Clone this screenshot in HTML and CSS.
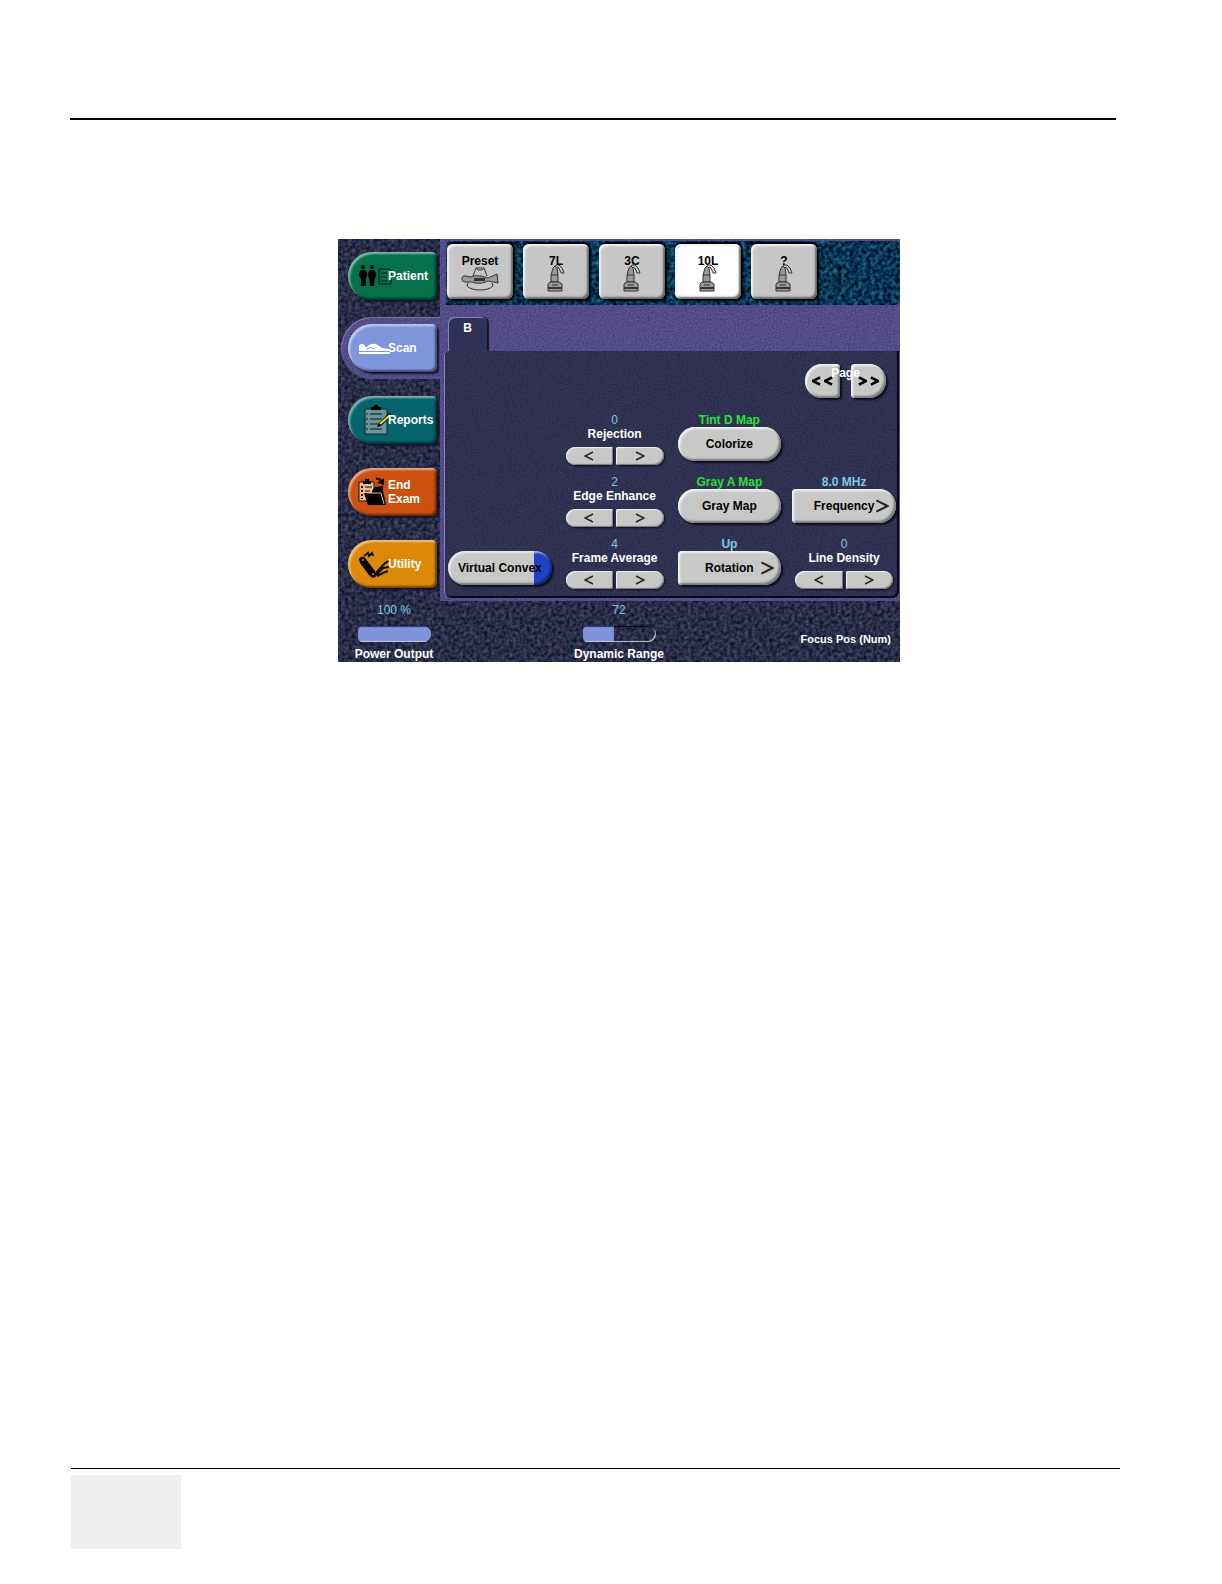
FILE: index.html
```html
<!DOCTYPE html>
<html lang="en">
<head>
    <meta charset="UTF-8">
    <meta name="viewport" content="width=device-width, initial-scale=1.0">
    <title>Touch Panel - Scan</title>
    <link rel="stylesheet" href="styles.css">
</head>
<body>
    <!-- Shared textures and symbols -->
    <svg class="defs" aria-hidden="true">
        <filter id="granite" x="0" y="0" width="100%" height="100%" color-interpolation-filters="sRGB">
            <feTurbulence type="fractalNoise" baseFrequency="0.28" numOctaves="3" seed="4"/>
            <feColorMatrix values="0.38 0 0 0 -0.03  0.35 0.04 0 0 -0.02  0.4 0 0.1 0 0.03  0 0 0 0 1"/>
        </filter>
        <filter id="marble" x="0" y="0" width="100%" height="100%" color-interpolation-filters="sRGB">
            <feTurbulence type="fractalNoise" baseFrequency="0.24" numOctaves="4" seed="9"/>
            <feColorMatrix values="0.3 0 0 0 -0.12  0.7 0 0 0 -0.14  0.7 0 0 0 -0.03  0 0 0 0 1"/>
        </filter>
        <filter id="weave" x="0" y="0" width="100%" height="100%" color-interpolation-filters="sRGB">
            <feTurbulence type="fractalNoise" baseFrequency="0.6" numOctaves="2" seed="2"/>
            <feColorMatrix values="0.2 0 0 0 0.23  0.2 0 0 0 0.2  0.2 0 0 0 0.44  0 0 0 0 1"/>
        </filter>
        <filter id="weave-dark" x="0" y="0" width="100%" height="100%" color-interpolation-filters="sRGB">
            <feTurbulence type="fractalNoise" baseFrequency="0.6" numOctaves="2" seed="2"/>
            <feColorMatrix values="0.12 0 0 0 0.13  0.12 0 0 0 0.13  0.12 0 0 0 0.26  0 0 0 0 1"/>
        </filter>
        <symbol id="prev" viewBox="0 0 10 10"><path d="M9 1 L1 5 L9 9"/></symbol>
        <symbol id="next" viewBox="0 0 10 10"><path d="M1 1 L9 5 L1 9"/></symbol>
        <symbol id="probe" viewBox="0 0 18 28">
            <path class="cable" d="M7 4 L9 1 L12 1 L15 4 L17 9 M10 3 L12 4 L14 9 L17 9"/>
            <path class="body" d="M4 11 L6 4 L8 2 L10 4 L11 11 V18 H4 Z"/>
            <path class="body" d="M3 18 H12 L15 20 V27 H1 V20 Z"/>
            <path class="cable" d="M4 11 H11 M5 21 H11"/>
            <path class="foot" d="M1 23 H15 V25 H1 Z"/>
        </symbol>
    </svg>

    <header class="page-header"></header>

    <main class="page-main">
        <div class="screen">
            <nav class="side">
                <ul>
                    <li>
                        <button type="button" class="side-btn patient">
                            <svg viewBox="0 0 34 34">
                                <circle cx="5" cy="8" r="2"/><circle cx="14" cy="8" r="2"/>
                                <path d="M3 11 H7 Q11 14 8 19 L8 27 H3 V20 Q-1 15 3 11 Z M12 11 H16 Q20 15 17 19 L16 27 H12 L11 19 Q8 15 12 11 Z"/>
                                <path class="line" d="M21 10 H31 L33 12 V25 H21 Z M23 14 H29 M23 18 H29 M23 22 H29"/>
                            </svg>
                            <span>Patient</span>
                        </button>
                    </li>
                    <li class="current">
                        <button type="button" class="side-btn scan">
                            <svg viewBox="0 0 34 34">
                                <circle cx="4" cy="16" r="3" fill="#fff"/>
                                <path fill="#fff" d="M5 16 L9 16 Q12 12 18 13 L24 17 L32 18 V20 H1 V18 Z M1 21 H32 V23 H1 Z"/>
                                <path fill="none" stroke="#7f96dc" d="M8 18 Q12 15 17 18"/>
                            </svg>
                            <span>Scan</span>
                        </button>
                    </li>
                    <li>
                        <button type="button" class="side-btn reports">
                            <svg viewBox="0 0 34 34">
                                <path fill="#6b9496" stroke="#14202a" d="M7 6 H29 V31 H7 Z"/>
                                <path d="M13 7 V4 H16 V2 H20 V4 H23 V7 Z"/>
                                <path class="line" d="M12 11 H24 M12 16 H24 M12 21 H21 M12 26 H24"/>
                                <path class="line" stroke-dasharray="2 3" d="M9 10 V28"/>
                                <path d="M19 24 L21 20 L31 10 L34 12 L23 23 Z"/>
                                <path fill="none" stroke="#e8dc38" stroke-width="2" d="M22 21 L32 12"/>
                            </svg>
                            <span>Reports</span>
                        </button>
                    </li>
                    <li>
                        <button type="button" class="side-btn end">
                            <svg viewBox="0 0 34 34">
                                <path fill="#eab993" stroke="#1c0f08" d="M1 7 H16 V26 H1 Z"/>
                                <path d="M5 9 V6 H7 V4 H11 V6 H13 V9 Z"/>
                                <path class="line" d="M7 12 H14 M7 16 H12 M7 20 H9"/>
                                <path class="line" stroke-width="2" stroke-dasharray="2 2" d="M4 11 V24"/>
                                <path d="M14 16 L17 12 L25 11 V16 L28 30 H10 L6 18 H14 Z"/>
                                <path fill="none" stroke="#eab993" d="M9 18 H23 L26 29"/>
                                <path class="line" stroke-width="2" d="M18 4 Q22 3 23 6"/>
                                <path d="M19 8 L26 3 V10 Z"/>
                            </svg>
                            <span>End<br>Exam</span>
                        </button>
                    </li>
                    <li>
                        <button type="button" class="side-btn utility">
                            <svg viewBox="0 0 34 34">
                                <path d="M1 12 Q3 8 7 11 L17 24 Q20 29 16 31 Q13 31 11 28 L2 16 Z"/>
                                <path class="line" stroke-width="2" d="M6 9 L10 6 L11 9 L14 6 L15 9 M17 27 L27 16 L31 14 M18 28 L25 21 L31 20 M19 29 L25 26 L30 24"/>
                                <circle cx="5" cy="13" r="1" fill="#e08a10"/><circle cx="15" cy="27" r="1" fill="#e08a10"/>
                            </svg>
                            <span>Utility</span>
                        </button>
                    </li>
                </ul>
            </nav>

            <section class="work">
                <div class="probes">
                    <button type="button" class="probe-btn">
                        <span>Preset</span>
                        <svg class="wide" viewBox="0 0 38 28">
                            <path class="cable" d="M12 12 L15 4 H23 L26 12 M15 4 L17 6 H21 L23 4 M7 19 L6 22 Q10 26 19 26 Q28 26 32 22 L31 19"/>
                            <path class="body" d="M1 15 Q1 11 5 12 L9 13 Q13 11 20 12 L27 14 L36 10 L37 19 L27 17 Q19 21 11 18 L4 18 Q1 18 1 15 Z"/>
                            <path class="foot" d="M13 14 H24 V17 H13 Z"/>
                        </svg>
                    </button>
                    <button type="button" class="probe-btn"><span>7L</span><svg><use href="#probe"/></svg></button>
                    <button type="button" class="probe-btn"><span>3C</span><svg><use href="#probe"/></svg></button>
                    <button type="button" class="probe-btn selected"><span>10L</span><svg><use href="#probe"/></svg></button>
                    <button type="button" class="probe-btn"><span>?</span><svg><use href="#probe"/></svg></button>
                </div>

                <div class="tabs">
                    <button type="button" class="tab">B</button>
                </div>

                <div class="panel">
                    <div class="pager">
                        <button type="button" class="key left" aria-label="Previous page">
                            <svg class="bold"><use href="#prev"/></svg><svg class="bold"><use href="#prev"/></svg>
                        </button>
                        <button type="button" class="key right" aria-label="Next page">
                            <svg class="bold"><use href="#next"/></svg><svg class="bold"><use href="#next"/></svg>
                        </button>
                        <span class="pager-label">Page</span>
                    </div>

                    <div class="controls">
                        <div class="cell col2">
                            <span class="value">0</span>
                            <span class="name">Rejection</span>
                            <div class="stepper">
                                <button type="button" class="key left" aria-label="Rejection down"><svg><use href="#prev"/></svg></button>
                                <button type="button" class="key right" aria-label="Rejection up"><svg><use href="#next"/></svg></button>
                            </div>
                        </div>
                        <div class="cell">
                            <span class="value map">Tint D Map</span>
                            <button type="button" class="key pill">Colorize</button>
                        </div>

                        <div class="cell col2">
                            <span class="value">2</span>
                            <span class="name">Edge Enhance</span>
                            <div class="stepper">
                                <button type="button" class="key left" aria-label="Edge Enhance down"><svg><use href="#prev"/></svg></button>
                                <button type="button" class="key right" aria-label="Edge Enhance up"><svg><use href="#next"/></svg></button>
                            </div>
                        </div>
                        <div class="cell">
                            <span class="value map">Gray A Map</span>
                            <button type="button" class="key pill">Gray Map</button>
                        </div>
                        <div class="cell">
                            <span class="value strong">8.0 MHz</span>
                            <button type="button" class="key more">Frequency<svg><use href="#next"/></svg></button>
                        </div>

                        <div class="cell">
                            <span class="value"></span>
                            <button type="button" class="key pill toggle">Virtual Convex</button>
                        </div>
                        <div class="cell">
                            <span class="value">4</span>
                            <span class="name">Frame Average</span>
                            <div class="stepper">
                                <button type="button" class="key left" aria-label="Frame Average down"><svg><use href="#prev"/></svg></button>
                                <button type="button" class="key right" aria-label="Frame Average up"><svg><use href="#next"/></svg></button>
                            </div>
                        </div>
                        <div class="cell">
                            <span class="value strong">Up</span>
                            <button type="button" class="key more">Rotation<svg><use href="#next"/></svg></button>
                        </div>
                        <div class="cell">
                            <span class="value">0</span>
                            <span class="name">Line Density</span>
                            <div class="stepper">
                                <button type="button" class="key left" aria-label="Line Density down"><svg><use href="#prev"/></svg></button>
                                <button type="button" class="key right" aria-label="Line Density up"><svg><use href="#next"/></svg></button>
                            </div>
                        </div>
                    </div>
                </div>
            </section>

            <div class="knobs">
                <div class="knob">
                    <span class="value">100 %</span>
                    <progress id="power" max="100" value="100"></progress>
                    <label for="power">Power Output</label>
                </div>
                <div class="knob">
                    <span class="value">72</span>
                    <progress id="range" max="100" value="43"></progress>
                    <label for="range">Dynamic Range</label>
                </div>
                <span class="focus">Focus Pos (Num)</span>
            </div>
        </div>
    </main>

    <footer class="page-footer">
        <div class="page-box"></div>
    </footer>
</body>
</html>
```

FILE: styles.css
```css
* {
    box-sizing: border-box;
}
body {
    margin: 0;
    min-height: 100vh;
    display: flex;
    flex-direction: column;
    background: #fff;
    font-family: "Liberation Sans", Arial, sans-serif;
    font-size: 12px;
    font-weight: bold;
    line-height: 14px;
}
button {
    font: inherit;
    border: none;
    margin: 0;
    padding: 0;
    cursor: pointer;
}
.defs {
    position: absolute;
    width: 0;
    height: 0;
}

/* Page */
.page-header {
    height: 120px;
    margin: 0 106px 0 70px;
    border-bottom: 2px solid #000;
}
.page-main {
    flex: 1;
    padding: 119px 0 40px 16px;
}
.page-footer {
    margin: 0 102px 35px 71px;
    padding-top: 6px;
    border-top: 1px solid #000;
}
.page-box {
    width: 110px;
    height: 74px;
    background: #eee;
}

/* Screen */
.screen {
    display: grid;
    grid-template-columns: 102px 1fr;
    max-width: 562px;
    margin: 0 auto;
    color: #fff;
}
.screen,
.probes,
.work,
.panel,
.current {
    position: relative;
    isolation: isolate;
    overflow: hidden;
}
.screen::before,
.probes::before,
.work::before,
.panel::before,
.current::before {
    content: "";
    position: absolute;
    inset: 0;
    z-index: -1;
}
.screen::before {
    filter: url(#granite);
}
.probes::before {
    filter: url(#marble);
}
.work::before,
.current::before {
    filter: url(#weave);
}
.panel::before {
    filter: url(#weave-dark);
}

/* Bevels drawn over the textures */
.panel::after,
.current::after {
    content: "";
    position: absolute;
    inset: 0;
    border-radius: inherit;
    pointer-events: none;
}
.panel::after {
    box-shadow: inset 1px 0 0 #8a84b8, inset -2px -2px 1px #08081c;
}
.current::after {
    z-index: -1;
    box-shadow: inset 1px 1px 0 #7c76ac;
}

/* Left menu */
.side ul {
    list-style: none;
    margin: 0;
    padding: 6px 0 0 3px;
    display: flex;
    flex-direction: column;
    gap: 10px;
}
.side li {
    padding: 7px 3px 7px 7px;
}
.side .current {
    border-radius: 31px 0 0 31px;
}
.side-btn {
    display: flex;
    align-items: center;
    width: 100%;
    height: 48px;
    padding-left: 10px;
    color: #fff;
    text-align: left;
    border-radius: 24px 5px 5px 24px;
    box-shadow: inset 2px 2px 2px rgba(255,255,255,0.5), inset -2px -2px 2px rgba(0,0,0,0.5), 2px 2px 2px #14142c;
}
.side-btn svg {
    flex: none;
    width: 34px;
    height: 34px;
    margin-right: -4px;
}
.side-btn span {
    position: relative;
}
.side-btn .line {
    fill: none;
    stroke: #101010;
}
.patient {
    background: #04704c;
}
.scan {
    background: #7f96dc;
}
.reports {
    background: #04646c;
}
.end {
    background: #cc5010;
}
.utility {
    background: #dc8808;
}

/* Work area */
.work {
    padding: 2px 1px 3px 4px;
}
.probes {
    display: flex;
    gap: 10px;
    height: 64px;
    margin: 0 -1px 0 2px;
    padding: 3px 0 0 1px;
    border-radius: 5px 5px 5px 0;
}
.probe-btn {
    display: flex;
    flex-direction: column;
    align-items: center;
    width: 66px;
    height: 55px;
    padding-top: 10px;
    color: #000;
    background: #c6c6c6;
    border-radius: 6px;
    box-shadow: inset 2px 2px 2px #f0f0f0, inset -2px -2px 2px #666, 1px -2px 1px #000, 2px 2px 2px #000;
}
.probe-btn.selected {
    background: #fff;
}
.probe-btn svg {
    flex: none;
    width: 18px;
    height: 28px;
    margin-top: -4px;
}
.probe-btn svg.wide {
    width: 38px;
}
.cable {
    fill: none;
    stroke: #333;
}
.body {
    fill: #999;
    stroke: #333;
}
.selected .body {
    fill: #fff;
}
.foot {
    fill: #333;
}
.probe-btn.selected svg {
    fill: #fff;
}

.tabs {
    height: 46px;
    padding: 12px 0 0 4px;
}
.tab {
    width: 39px;
    height: 34px;
    padding-bottom: 12px;
    color: #fff;
    background: #303156;
    border-radius: 6px 6px 0 0;
    box-shadow: inset 1px 1px 0 #8a84b8, 2px 0 1px #14142c;
}
.panel {
    padding: 13px 3px 9px 4px;
    border-radius: 4px 0 6px 6px;
}

/* Grey keys */
.key {
    position: relative;
    display: flex;
    align-items: center;
    justify-content: center;
    height: 34px;
    color: #000;
    background: #c8c8c6;
    box-shadow: inset 2px 2px 2px #f2f2f2, inset -2px -2px 2px #777, 2px 2px 2px #0c0c20;
}
.key svg {
    width: 10px;
    height: 10px;
    fill: none;
    stroke: #222;
    stroke-width: 1.4;
}
.key svg.bold {
    width: 9px;
    stroke: #000;
    stroke-width: 3;
}
.left {
    border-radius: 17px 4px 4px 17px;
}
.right {
    border-radius: 4px 17px 17px 4px;
}
.pill {
    border-radius: 17px;
}
.more {
    border-radius: 4px 17px 17px 4px;
}
.key.more svg {
    position: absolute;
    right: 7px;
    width: 14px;
    height: 14px;
}
.toggle {
    background: linear-gradient(to right, #c8c8c6 86px, #1c44c4 86px);
    box-shadow: inset 2px 2px 2px rgba(255,255,255,0.6), inset -2px -2px 2px rgba(0,0,0,0.4), 2px 2px 2px #0c0c20;
}

.pager {
    position: relative;
    display: flex;
    justify-content: flex-end;
    gap: 11px;
    width: 81px;
    margin: 0 10px 15px auto;
}
.pager .key {
    flex: 1;
    gap: 3px;
}
.pager-label {
    position: absolute;
    top: 2px;
    left: 0;
    right: 0;
    text-align: center;
}
.controls {
    display: grid;
    grid-template-columns: repeat(4, 1fr);
    gap: 10px 11px;
}
.cell {
    height: 52px;
    text-align: center;
}
.col2 {
    grid-column: 2;
}
.value,
.name {
    display: block;
    height: 14px;
}
.value {
    color: #7ccce4;
    font-weight: normal;
}
.value.strong {
    font-weight: bold;
}
.value.map {
    color: #2ce03c;
    font-weight: bold;
}
.cell > .key {
    width: 100%;
}
.stepper {
    display: flex;
    gap: 3px;
    padding: 6px 3px 0;
}
.stepper .key {
    flex: 1;
    height: 18px;
    box-shadow: inset 1px 1px 1px #f2f2f2, inset -1px -1px 1px #777, 1px 1px 2px #0c0c20;
}
.stepper .left {
    border-radius: 9px 2px 2px 9px;
}
.stepper .right {
    border-radius: 2px 9px 9px 2px;
}

/* Bottom readouts */
.knobs {
    grid-column: 1 / -1;
    display: grid;
    grid-template-columns: 112px 1fr 112px;
    height: 61px;
    padding-top: 2px;
}
.knob {
    display: flex;
    flex-direction: column;
    align-items: center;
}
.knob progress {
    appearance: none;
    width: 73px;
    height: 16px;
    margin: 9px 0 5px;
    border: none;
    border-radius: 5px 9px 9px 5px;
    overflow: hidden;
    background: transparent;
    box-shadow: inset -1px -1px 1px #c4c8e0, inset 1px 1px 1px #060618;
}
.knob progress::-webkit-progress-bar {
    background: transparent;
}
.knob progress::-webkit-progress-value {
    background: #8094dc;
    box-shadow: inset 0 -1px 1px #c4c8e0, inset 0 1px 1px #2c3470;
}
.focus {
    padding: 29px 9px 0 0;
    font-size: 11px;
    text-align: right;
    white-space: nowrap;
}
```
